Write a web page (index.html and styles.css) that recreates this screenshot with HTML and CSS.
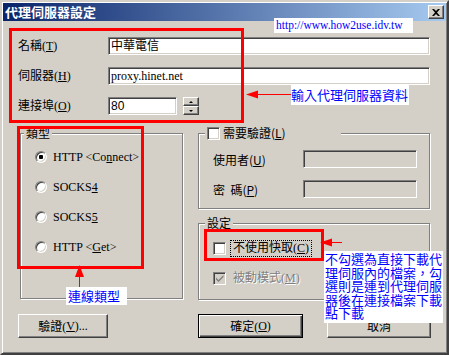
FILE: index.html
```html
<!DOCTYPE html>
<html lang="zh-Hant">
<head>
    <meta charset="utf-8">
    <title>代理伺服器設定</title>
    <link rel="stylesheet" href="styles.css">
</head>
<body>
    <div class="window">
        <div class="titlebar">
            <span class="title">代理伺服器設定</span>
            <span class="close-btn">
                <svg width="8" height="7" viewBox="0 0 8 7"><path d="M0 0h2l2 2 2-2h2L5 3.5 8 7H6L4 5 2 7H0l3-3.5z" fill="#000"/></svg>
            </span>
        </div>

        <div class="fields">
            <label>名稱(<u>T</u>)</label>
            <div class="field">中華電信</div>

            <label>伺服器(<u>H</u>)</label>
            <div class="field">proxy.hinet.net</div>

            <label>連接埠(<u>O</u>)</label>
            <div class="port">
                <div class="field port-field">80</div>
                <div class="spinner">
                    <span class="spin-btn"><i class="arrow-up"></i></span>
                    <span class="spin-btn"><i class="arrow-down"></i></span>
                </div>
            </div>
        </div>

        <div class="groups">
            <div class="group type-group">
                <div class="group-title">類型</div>
                <div class="radio-list">
                    <div class="radio-row"><span class="radio checked"></span>HTTP &lt;Co<u>n</u>nect&gt;</div>
                    <div class="radio-row"><span class="radio"></span>SOCKS<u>4</u></div>
                    <div class="radio-row"><span class="radio"></span>SOCKS<u>5</u></div>
                    <div class="radio-row"><span class="radio"></span>HTTP &lt;<u>G</u>et&gt;</div>
                </div>
            </div>

            <div class="right-col">
                <div class="group auth-group">
                    <div class="group-title auth-title"><span class="checkbox"></span><span class="auth-label">需要驗證(<u>L</u>)</span></div>
                    <div class="auth-rows">
                        <div class="auth-row"><label>使用者(<u>U</u>)</label><div class="field disabled"></div></div>
                        <div class="auth-row"><label>密&nbsp;&nbsp;碼(<u>P</u>)</label><div class="field disabled"></div></div>
                    </div>
                </div>

                <div class="group set-group">
                    <div class="group-title">設定</div>
                    <div class="set-rows">
                        <div class="set-row"><span class="checkbox"></span><span class="check-label focus">不使用快取(<u>C</u>)</span></div>
                        <div class="set-row">
                            <span class="checkbox disabled">
                                <svg width="11" height="11" viewBox="0 0 11 11"><path d="M2 4.5l2.5 2.5 5-5v2l-5 5L2 6.5z" fill="#808080"/></svg>
                            </span>
                            <span class="check-label greyed">被動模式(<u>M</u>)</span>
                        </div>
                    </div>
                </div>
            </div>
        </div>

        <div class="buttons">
            <span class="btn btn-verify">驗證(<u>V</u>)...</span>
            <span class="btn btn-default">確定(<u>O</u>)</span>
            <span class="btn btn-cancel">取消</span>
        </div>
    </div>

    <!-- annotations drawn over the dialog -->
    <svg class="marks" width="449" height="355" viewBox="0 0 449 355">
        <g fill="none" stroke="#ff0000" stroke-width="3">
            <rect x="10.5" y="29.5" width="232" height="92"/>
            <rect x="18.5" y="127.5" width="124" height="140"/>
            <rect x="205.5" y="230.5" width="117" height="29"/>
        </g>
        <g stroke="#ff0000" stroke-width="1">
            <line x1="256" y1="94.5" x2="292" y2="94.5"/>
            <line x1="79.5" y1="275" x2="79.5" y2="287"/>
            <line x1="330" y1="242.5" x2="342" y2="242.5"/>
        </g>
        <g fill="#ff0000">
            <polygon points="246,94.5 258,90.5 258,98.5"/>
            <polygon points="79.5,265 75,277 84,277"/>
            <polygon points="320,242.5 332,238.5 332,246.5"/>
        </g>
    </svg>
    <div class="note note-url">http://www.how2use.idv.tw</div>
    <div class="note note-proxy">輸入代理伺服器資料</div>
    <div class="note note-type">連線類型</div>
    <div class="note note-cache">不勾選為直接下載代<br>理伺服內的檔案，勾<br>選則是連到代理伺服<br>器後在連接檔案下載<br>點下載</div>
</body>
</html>
```

FILE: styles.css
```css
* { box-sizing: border-box; }
body { margin: 0; background: #d4d0c8; font-family: "Liberation Serif", "Noto Sans CJK TC", serif; font-size: 12px; color: #000; }
u { text-decoration: underline; }

.window {
    width: 449px;
    height: 355px;
    background: #d4d0c8;
    border: 2px solid;
    border-color: #d4d0c8 #404040 #404040 #d4d0c8;
    box-shadow: inset 1px 1px #fff, inset -1px -1px #808080;
    padding: 1px;
}
.titlebar {
    height: 18px;
    background: linear-gradient(to right, #0a246a, #a6caf0);
    display: flex;
    align-items: center;
    justify-content: space-between;
    padding: 0 2px;
}
.title { color: #fff; font-weight: bold; font-size: 13px; line-height: 18px; font-family: "Noto Sans CJK TC", sans-serif; }
.close-btn {
    width: 16px;
    height: 14px;
    display: flex;
    align-items: center;
    justify-content: center;
    background: #d4d0c8;
    border: 1px solid;
    border-color: #fff #404040 #404040 #fff;
    box-shadow: inset -1px -1px #808080;
}

/* sunken edit box */
.field {
    height: 18px;
    background: #fff;
    border: 1px solid;
    border-color: #808080 #fff #fff #808080;
    box-shadow: inset 1px 1px #404040, inset -1px -1px #d4d0c8;
    padding: 0 2px;
    line-height: 16px;
    white-space: nowrap;
}
.field.disabled { background: #d4d0c8; }

.fields {
    display: grid;
    grid-template-columns: 90px 322px;
    grid-auto-rows: 18px;
    row-gap: 12px;
    align-items: center;
    padding: 16px 0 0 15px;
}
.fields label { line-height: 18px; }
.port { display: flex; align-items: center; }
.port-field { width: 69px; font-family: "Liberation Sans", sans-serif; }
.spinner { width: 16px; height: 18px; margin-left: 6px; display: flex; flex-direction: column; }
.spin-btn {
    flex: 1;
    display: flex;
    align-items: center;
    justify-content: center;
    background: #d4d0c8;
    border: 1px solid;
    border-color: #fff #404040 #404040 #fff;
    box-shadow: inset -1px -1px #808080;
}
.arrow-up { width: 0; height: 0; border-left: 2px solid transparent; border-right: 2px solid transparent; border-bottom: 2px solid #000; }
.arrow-down { width: 0; height: 0; border-left: 2px solid transparent; border-right: 2px solid transparent; border-top: 2px solid #000; }

/* etched group boxes */
.groups { display: flex; gap: 15px; margin-top: 18px; padding-left: 17px; }
.group {
    border: 1px solid #808080;
    box-shadow: inset 1px 1px #fff, 1px 1px #fff;
}
.group-title {
    display: block;
    width: fit-content;
    height: 14px;
    line-height: 14px;
    margin: -8px 0 0 6px;
    padding: 0 2px;
    background: #d4d0c8;
    font-family: "Noto Sans CJK TC", sans-serif;
}
.type-group { width: 163px; height: 166px; }
.type-group .group-title { margin-left: 3px; }
.radio-list { margin-top: 2px; }
.radio-row { height: 30px; display: flex; align-items: center; padding-left: 14px; }
.radio {
    width: 12px;
    height: 12px;
    margin-right: 6px;
    border-radius: 50%;
    border: 1px solid;
    border-color: #808080 #fff #fff #808080;
    box-shadow: inset 1px 1px #404040, inset -1px -1px #d4d0c8;
    background: #fff;
}
.radio.checked { background: radial-gradient(circle, #000 0 2px, #fff 2.5px); }

.right-col { width: 232px; display: flex; flex-direction: column; gap: 14px; }
.auth-group { height: 76px; }
.auth-title { width: 136px; display: flex; align-items: center; }
.auth-label { margin-left: 3px; }
.auth-rows { margin-top: 4px; }
.auth-row { height: 30px; display: flex; align-items: center; padding-left: 14px; }
.auth-row label { width: 90px; font-family: "Noto Sans CJK TC", sans-serif; }
.auth-row .field { width: 114px; }

.checkbox {
    width: 13px;
    height: 13px;
    display: flex;
    align-items: center;
    justify-content: center;
    background: #fff;
    border: 1px solid;
    border-color: #808080 #fff #fff #808080;
    box-shadow: inset 1px 1px #404040, inset -1px -1px #d4d0c8;
}
.checkbox.disabled { background: #d4d0c8; }

.set-group { height: 77px; }
.set-rows { margin-top: 3px; }
.set-row { height: 30px; display: flex; align-items: center; padding-left: 14px; }
.check-label { margin-left: 4px; padding: 0 2px; line-height: 15px; border: 1px solid transparent; }
.check-label.focus { border: 1px dotted #000; }
.check-label.greyed { color: #808080; text-shadow: 1px 1px #fff; }

.buttons { display: flex; margin-top: 14px; padding-left: 15px; }
.btn {
    height: 24px;
    display: flex;
    align-items: center;
    justify-content: center;
    background: #d4d0c8;
    border: 1px solid;
    border-color: #fff #404040 #404040 #fff;
    box-shadow: inset -1px -1px #808080;
}
.btn-verify { width: 90px; }
.btn-default {
    width: 105px;
    margin-left: 90px;
    border-color: #000;
    box-shadow: inset 1px 1px #fff, inset -1px -1px #404040, inset -2px -2px #808080;
}
.btn-cancel { width: 104px; margin-left: 24px; }

/* annotations */
.marks { position: absolute; left: 0; top: 0; }
.note { position: absolute; background: #fff; color: #0000ff; font-family: "Noto Sans CJK TC", sans-serif; font-size: 13px; white-space: nowrap; }
.note-url { left: 274px; top: 18px; width: 139px; height: 15px; line-height: 15px; padding-left: 2px; font-family: "Liberation Serif", serif; font-size: 11.5px; }
.note-proxy { left: 291px; top: 85px; width: 118px; height: 20px; line-height: 20px; }
.note-type { left: 66px; top: 287px; width: 61px; height: 18px; line-height: 18px; padding-left: 2px; }
.note-cache { left: 324px; top: 251px; width: 119px; height: 72px; line-height: 13.5px; padding: 1px 0 0 1px; }
```
